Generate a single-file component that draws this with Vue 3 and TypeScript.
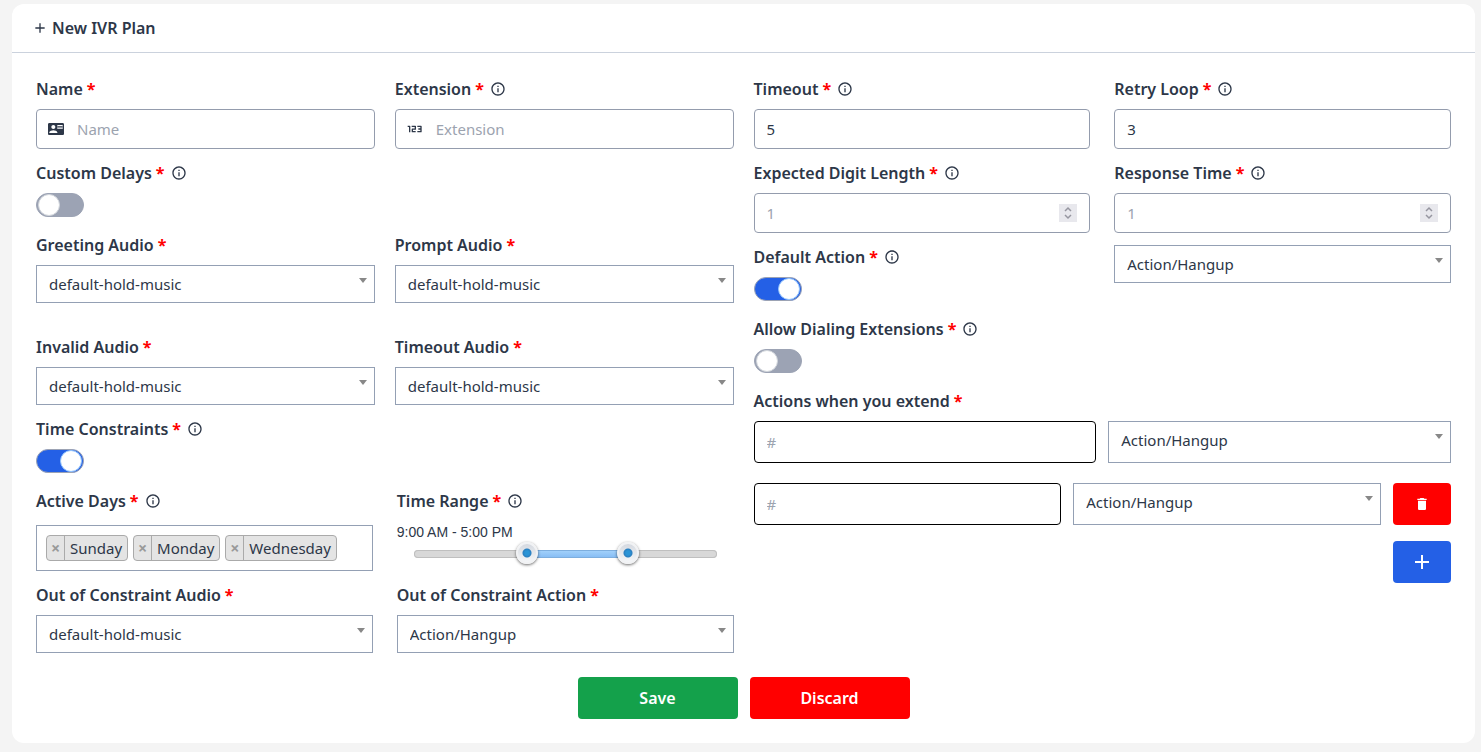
<script setup lang="ts">
import { computed, defineComponent, h, reactive, ref } from 'vue'

const INFO_PATH =
  'M11 9h2V7h-2v2zm1 11c-4.41 0-8-3.59-8-8s3.59-8 8-8 8 3.59 8 8-3.59 8-8 8zm0-18C6.48 2 2 6.48 2 12s4.48 10 10 10 10-4.48 10-10S17.52 2 12 2zm-1 15h2v-6h-2v6z'

/** Marker after a label: the required star and, optionally, the info icon. */
const Mark = defineComponent({
  props: { info: Boolean },
  setup(props) {
    return () => [
      h('span', { class: 'star' }, '*'),
      props.info
        ? h('svg', { class: 'info', viewBox: '0 0 24 24', 'aria-hidden': 'true' }, [h('path', { d: INFO_PATH })])
        : null,
    ]
  },
})

const MUSIC = ['default-hold-music']
const ACTIONS = ['Action/Hangup']

const form = reactive({
  name: '',
  extension: '',
  timeout: '5',
  retryLoop: '3',
  digitLength: '',
  responseTime: '',
  customDelays: false,
  timeConstraints: true,
  defaultAction: true,
  allowDialing: false,
  defaultTarget: ACTIONS[0],
  outAudio: MUSIC[0],
  outAction: ACTIONS[0],
})

const audios = reactive([
  { id: 'greeting', label: 'Greeting Audio', value: MUSIC[0] },
  { id: 'prompt', label: 'Prompt Audio', value: MUSIC[0] },
  { id: 'invalid', label: 'Invalid Audio', value: MUSIC[0] },
  { id: 'timeout-audio', label: 'Timeout Audio', value: MUSIC[0] },
])

const days = ref<string[]>(['Sunday', 'Monday', 'Wednesday'])
const removeDay = (day: string) => {
  days.value = days.value.filter((d) => d !== day)
}

interface ExtendRow {
  digit: string
  action: string
}
const rows = ref<ExtendRow[]>([
  { digit: '', action: ACTIONS[0] },
  { digit: '', action: ACTIONS[0] },
])
const addRow = () => rows.value.push({ digit: '', action: ACTIONS[0] })
const removeRow = (index: number) => rows.value.splice(index, 1)

const DAY_MINUTES = 1440
const from = ref(540)
const to = ref(1020)
const clock = (minutes: number) => {
  const hour = Math.floor(minutes / 60)
  const min = String(minutes % 60).padStart(2, '0')
  return `${hour % 12 || 12}:${min} ${hour % 24 < 12 ? 'AM' : 'PM'}`
}
const rangeText = computed(() => `${clock(from.value)} - ${clock(to.value)}`)
const fillStyle = computed(() => ({
  left: `${(from.value / DAY_MINUTES) * 100}%`,
  width: `${((to.value - from.value) / DAY_MINUTES) * 100}%`,
}))
</script>

<template>
  <main class="card">
    <header class="head">
      <svg class="head-icon" viewBox="0 0 24 24" aria-hidden="true">
        <path d="M19 13h-6v6h-2v-6H5v-2h6V5h2v6h6z" />
      </svg>
      <h1>New IVR Plan</h1>
    </header>

    <form class="body" @submit.prevent>
      <div class="halves">
        <section class="half">
          <div class="pair">
            <div class="field">
              <label class="label" for="name">Name <Mark /></label>
              <div class="box">
                <svg class="box-icon" viewBox="0 0 24 24" aria-hidden="true">
                  <path
                    fill-rule="evenodd"
                    d="M22 3H2C.9 3 0 3.900 0 5v14c0 1.100.9 2 2 2h20c1.100 0 2-.9 2-2V5c0-1.100-.9-2-2-2zM8 6c1.660 0 3 1.340 3 3s-1.340 3-3 3-3-1.340-3-3 1.340-3 3-3zm6 12H2v-1c0-2 4-3.100 6-3.100s6 1.100 6 3.100v1zm8-6h-8V6h8v6z"
                  />
                  <path d="M14 7.500h8v1H14zM14 9.800h8v1H14z" />
                </svg>
                <input id="name" v-model="form.name" class="input with-icon" type="text" placeholder="Name" />
              </div>
            </div>
            <div class="field">
              <label class="label" for="extension">Extension <Mark info /></label>
              <div class="box">
                <svg class="box-icon digits" viewBox="0 0 24 24" aria-hidden="true">
                  <path
                    d="M1 8h3V17M7 8h5.500v4.200H8V16H13M15.500 8H21V16H15.500M17 12H21"
                  />
                </svg>
                <input id="extension" v-model="form.extension" class="input with-icon" type="text" placeholder="Extension" />
              </div>
            </div>
          </div>

          <div class="field toggle-field">
            <label class="label" for="delays">Custom Delays <Mark info /></label>
            <input id="delays" v-model="form.customDelays" class="toggle" type="checkbox" />
          </div>

          <div class="pair audios">
            <div v-for="audio in audios" :key="audio.id" class="field">
              <label class="label" :for="audio.id">{{ audio.label }} <Mark /></label>
              <div class="select-box">
                <select :id="audio.id" v-model="audio.value" class="select">
                  <option v-for="m in MUSIC" :key="m">{{ m }}</option>
                </select>
              </div>
            </div>
          </div>

          <div class="field toggle-field">
            <label class="label" for="constraints">Time Constraints <Mark info /></label>
            <input id="constraints" v-model="form.timeConstraints" class="toggle" type="checkbox" />
          </div>

          <div class="pair wide">
            <div class="field days-field">
              <label class="label" for="days">Active Days <Mark info /></label>
              <div class="tags">
                <span v-for="day in days" :key="day" class="tag">
                  <button class="tag-remove" type="button" @click="removeDay(day)">×</button>
                  <span class="tag-text">{{ day }}</span>
                </span>
                <input id="days" class="tag-search" type="text" />
              </div>
            </div>
            <div class="field">
              <label class="label" for="from">Time Range <Mark info /></label>
              <output class="range-text" for="from to">{{ rangeText }}</output>
              <div class="slider">
                <div class="track"><div class="fill" :style="fillStyle"></div></div>
                <input id="from" v-model.number="from" class="thumb" type="range" min="0" :max="DAY_MINUTES" step="15" />
                <input
                  id="to"
                  v-model.number="to"
                  class="thumb"
                  type="range"
                  min="0"
                  :max="DAY_MINUTES"
                  step="15"
                  aria-label="Time Range"
                />
              </div>
            </div>
            <div class="field">
              <label class="label" for="out-audio">Out of Constraint Audio <Mark /></label>
              <div class="select-box">
                <select id="out-audio" v-model="form.outAudio" class="select">
                  <option v-for="m in MUSIC" :key="m">{{ m }}</option>
                </select>
              </div>
            </div>
            <div class="field">
              <label class="label" for="out-action">Out of Constraint Action <Mark /></label>
              <div class="select-box">
                <select id="out-action" v-model="form.outAction" class="select">
                  <option v-for="a in ACTIONS" :key="a">{{ a }}</option>
                </select>
              </div>
            </div>
          </div>
        </section>

        <section class="half">
          <div class="pair wide">
            <div class="field">
              <label class="label" for="timeout">Timeout <Mark info /></label>
              <input id="timeout" v-model="form.timeout" class="input" type="text" />
            </div>
            <div class="field">
              <label class="label" for="retry">Retry Loop <Mark info /></label>
              <input id="retry" v-model="form.retryLoop" class="input" type="text" />
            </div>
            <div class="field">
              <label class="label" for="digits">Expected Digit Length <Mark info /></label>
              <div class="box">
                <input id="digits" v-model="form.digitLength" class="input" type="number" placeholder="1" />
                <svg class="spin" viewBox="0 0 18 18" aria-hidden="true"><path d="M6 7l3-3 3 3M6 11l3 3 3-3" /></svg>
              </div>
            </div>
            <div class="field">
              <label class="label" for="response">Response Time <Mark info /></label>
              <div class="box">
                <input id="response" v-model="form.responseTime" class="input" type="number" placeholder="1" />
                <svg class="spin" viewBox="0 0 18 18" aria-hidden="true"><path d="M6 7l3-3 3 3M6 11l3 3 3-3" /></svg>
              </div>
            </div>
            <div class="field toggle-field">
              <label class="label" for="default-action">Default Action <Mark info /></label>
              <input id="default-action" v-model="form.defaultAction" class="toggle" type="checkbox" />
            </div>
            <div class="select-box">
              <select v-model="form.defaultTarget" class="select" aria-label="Default Action">
                <option v-for="a in ACTIONS" :key="a">{{ a }}</option>
              </select>
            </div>
          </div>

          <div class="field toggle-field">
            <label class="label" for="dialing">Allow Dialing Extensions <Mark info /></label>
            <input id="dialing" v-model="form.allowDialing" class="toggle" type="checkbox" />
          </div>

          <div class="field">
            <label class="label" for="extend-0">Actions when you extend <Mark /></label>
            <div class="extend">
              <div v-for="(row, i) in rows" :key="i" class="extend-row" :class="{ removable: i > 0 }">
                <input
                  :id="`extend-${i}`"
                  v-model="row.digit"
                  class="input dark"
                  type="text"
                  placeholder="#"
                />
                <div class="select-box">
                  <select v-model="row.action" class="select tall" aria-label="Action">
                    <option v-for="a in ACTIONS" :key="a">{{ a }}</option>
                  </select>
                </div>
                <button v-if="i > 0" class="btn icon-btn red" type="button" aria-label="Delete" @click="removeRow(i)">
                  <svg class="trash" viewBox="0 0 24 24" aria-hidden="true">
                    <path d="M6 19c0 1.100.9 2 2 2h8c1.100 0 2-.9 2-2V7H6v12zM19 4h-3.500l-1-1h-5l-1 1H5v2h14V4z" />
                  </svg>
                </button>
              </div>
            </div>
            <button class="btn icon-btn blue" type="button" aria-label="Add" @click="addRow">
              <svg class="plus" viewBox="0 0 24 24" aria-hidden="true">
                <path d="M19 13h-6v6h-2v-6H5v-2h6V5h2v6h6z" />
              </svg>
            </button>
          </div>
        </section>
      </div>

      <div class="actions">
        <button class="btn wide-btn green" type="submit">Save</button>
        <button class="btn wide-btn red" type="button">Discard</button>
      </div>
    </form>
  </main>
</template>

<style>
body {
  margin: 0;
  background: #f4f4f4;
}
.star {
  color: #ff0000;
  font-weight: 700;
}
.info {
  width: 16px;
  height: 16px;
  margin-left: 2px;
  fill: #2d3748;
}
</style>

<style scoped>
.card,
.card * {
  box-sizing: border-box;
}
.card {
  margin: 4px 6px 9px 12px;
  overflow: hidden;
  background: #ffffff;
  border-radius: 12px;
  color: #2d3748;
  font-family: 'Noto Sans', 'Open Sans', sans-serif;
  font-size: 15px;
  line-height: 24px;
}
input,
select,
button {
  margin: 0;
  color: inherit;
  font: inherit;
}
.head {
  display: flex;
  align-items: center;
  gap: 4px;
  padding: 12px 20px;
  border-bottom: 1px solid #cbd2dd;
}
.head-icon {
  width: 16px;
  height: 16px;
  fill: #2d3748;
}
h1 {
  margin: 0;
  font-size: 16px;
  font-weight: 600;
}
.body {
  padding: 24px;
}
.halves {
  display: grid;
  grid-template-columns: minmax(0, 1fr) minmax(0, 1fr);
  column-gap: 20px;
}
.half {
  display: flex;
  flex-direction: column;
  gap: 12px;
  min-width: 0;
}
.pair {
  display: grid;
  grid-template-columns: minmax(0, 1fr) minmax(0, 1fr);
  gap: 12px 20px;
  align-items: start;
}
.pair.wide {
  column-gap: 24px;
}
.pair.audios {
  row-gap: 32px;
}
.field {
  display: flex;
  flex-direction: column;
  gap: 8px;
  min-width: 0;
}
.toggle-field {
  padding-bottom: 4px;
}
.days-field {
  gap: 12px;
}
.label {
  display: flex;
  align-items: center;
  gap: 4px;
  font-size: 16px;
  font-weight: 600;
  white-space: nowrap;
}
.box,
.select-box {
  position: relative;
  min-width: 0;
}
.input {
  display: block;
  width: 100%;
  min-width: 0;
  height: 40px;
  padding: 0 12px;
  background: #ffffff;
  border: 1px solid #949cad;
  border-radius: 4px;
  outline: none;
  appearance: none;
}
.input::placeholder {
  color: #9ca3af;
  opacity: 1;
}
.input[type='number'] {
  appearance: textfield;
}
.input[type='number']::-webkit-inner-spin-button {
  appearance: none;
}
.with-icon {
  padding-left: 40px;
}
.box-icon {
  position: absolute;
  top: 12px;
  left: 12px;
  width: 16px;
  height: 16px;
  fill: #2d3748;
}
.box-icon.digits {
  fill: none;
  stroke: #2d3748;
  stroke-width: 2;
  stroke-linejoin: round;
}
.spin {
  position: absolute;
  top: 11px;
  right: 13px;
  width: 18px;
  height: 18px;
  background: #e8e8ed;
  fill: none;
  stroke: #9696a0;
  stroke-width: 1.5;
  pointer-events: none;
}
.input.dark {
  height: 42px;
  border-color: #000000;
}
.select {
  display: block;
  width: 100%;
  height: 38px;
  padding: 0 28px 0 12px;
  background: #ffffff;
  border: 1px solid #94a0b4;
  border-radius: 0;
  outline: none;
  appearance: none;
}
.select.tall {
  height: 42px;
  padding-bottom: 4px;
}
.select-box::after {
  position: absolute;
  top: 13px;
  right: 8px;
  border: 4px solid transparent;
  border-top: 5px solid #888888;
  border-bottom: 0;
  content: '';
  pointer-events: none;
}
.toggle {
  display: flex;
  align-items: center;
  width: 48px;
  height: 24px;
  padding: 0 1px;
  background: #9ca3b4;
  border: 1px solid #9ca3b4;
  border-radius: 12px;
  appearance: none;
}
.toggle::before {
  width: 20px;
  height: 20px;
  background: #ffffff;
  border: 1px solid #d1d5db;
  border-radius: 50%;
  content: '';
}
.toggle:checked {
  justify-content: flex-end;
  background: #2460e6;
}
.toggle:checked::before {
  border-color: #93c5fd;
}
.tags {
  display: flex;
  gap: 5px;
  padding: 9px;
  border: 1px solid #94a0b4;
}
.tag {
  display: flex;
  flex: none;
  height: 26px;
  overflow: hidden;
  background: #e4e4e4;
  border: 1px solid #aaaaaa;
  border-radius: 4px;
}
.tag-remove {
  width: 18px;
  padding: 0;
  background: transparent;
  border: 0;
  border-right: 1px solid #aaaaaa;
  color: #999999;
  font-size: 16px;
  font-weight: 700;
  line-height: 24px;
}
.tag-text {
  padding: 0 5px;
}
.tag-search {
  flex: 1;
  width: 0;
  min-width: 0;
  height: 26px;
  padding: 0;
  background: transparent;
  border: 0;
  outline: none;
}
.range-text {
  font-family: 'Liberation Sans', Arial, sans-serif;
  font-size: 14px;
  line-height: 22px;
}
.slider {
  position: relative;
  height: 24px;
  margin: -9px 6px 0;
  padding: 8px 11px;
}
.track {
  position: relative;
  height: 8px;
  background: #d8d8d8;
  border-radius: 4px;
  box-shadow: inset 0 0 0 1px #bfbfbf;
}
.fill {
  position: absolute;
  top: 0;
  height: 8px;
  background: linear-gradient(#a5d3fb, #84bbf4);
  box-shadow: inset 0 1px #7daede, inset 0 -1px #7daede;
}
.thumb {
  position: absolute;
  top: 0;
  left: 0;
  width: 100%;
  height: 22px;
  background: transparent;
  outline: none;
  pointer-events: none;
  appearance: none;
}
.thumb::-webkit-slider-thumb {
  width: 22px;
  height: 22px;
  background:
    radial-gradient(circle, #2a94d6 0 2px, #2b7fc0 4px, transparent 5px),
    linear-gradient(#d5d9e0, #f4f6f8);
  border: 2px solid #f1f2f4;
  border-radius: 50%;
  box-shadow: 0 1px 3px rgba(0, 0, 0, 0.6);
  pointer-events: auto;
  appearance: none;
}
.extend {
  display: flex;
  flex-direction: column;
  gap: 20px;
}
.extend-row {
  display: grid;
  grid-template-columns: minmax(0, 1fr) minmax(0, 1fr);
  gap: 12px;
}
.extend-row.removable {
  grid-template-columns: minmax(0, 1fr) minmax(0, 1fr) auto;
}
.btn {
  display: flex;
  align-items: center;
  justify-content: center;
  height: 42px;
  padding: 0;
  border: 0;
  border-radius: 4px;
  color: #ffffff;
  font-size: 16px;
  font-weight: 600;
}
.icon-btn {
  flex: none;
  width: 58px;
}
.field > .icon-btn {
  align-self: flex-end;
  margin-top: 8px;
}
.icon-btn svg {
  fill: #ffffff;
}
.trash {
  width: 16px;
  height: 16px;
}
.plus {
  width: 24px;
  height: 24px;
}
.red {
  background: #ff0000;
}
.blue {
  background: #2460e6;
}
.green {
  background: #14a14b;
}
.wide-btn {
  width: 160px;
}
.actions {
  display: flex;
  justify-content: center;
  gap: 12px;
  margin-top: 24px;
}
</style>
